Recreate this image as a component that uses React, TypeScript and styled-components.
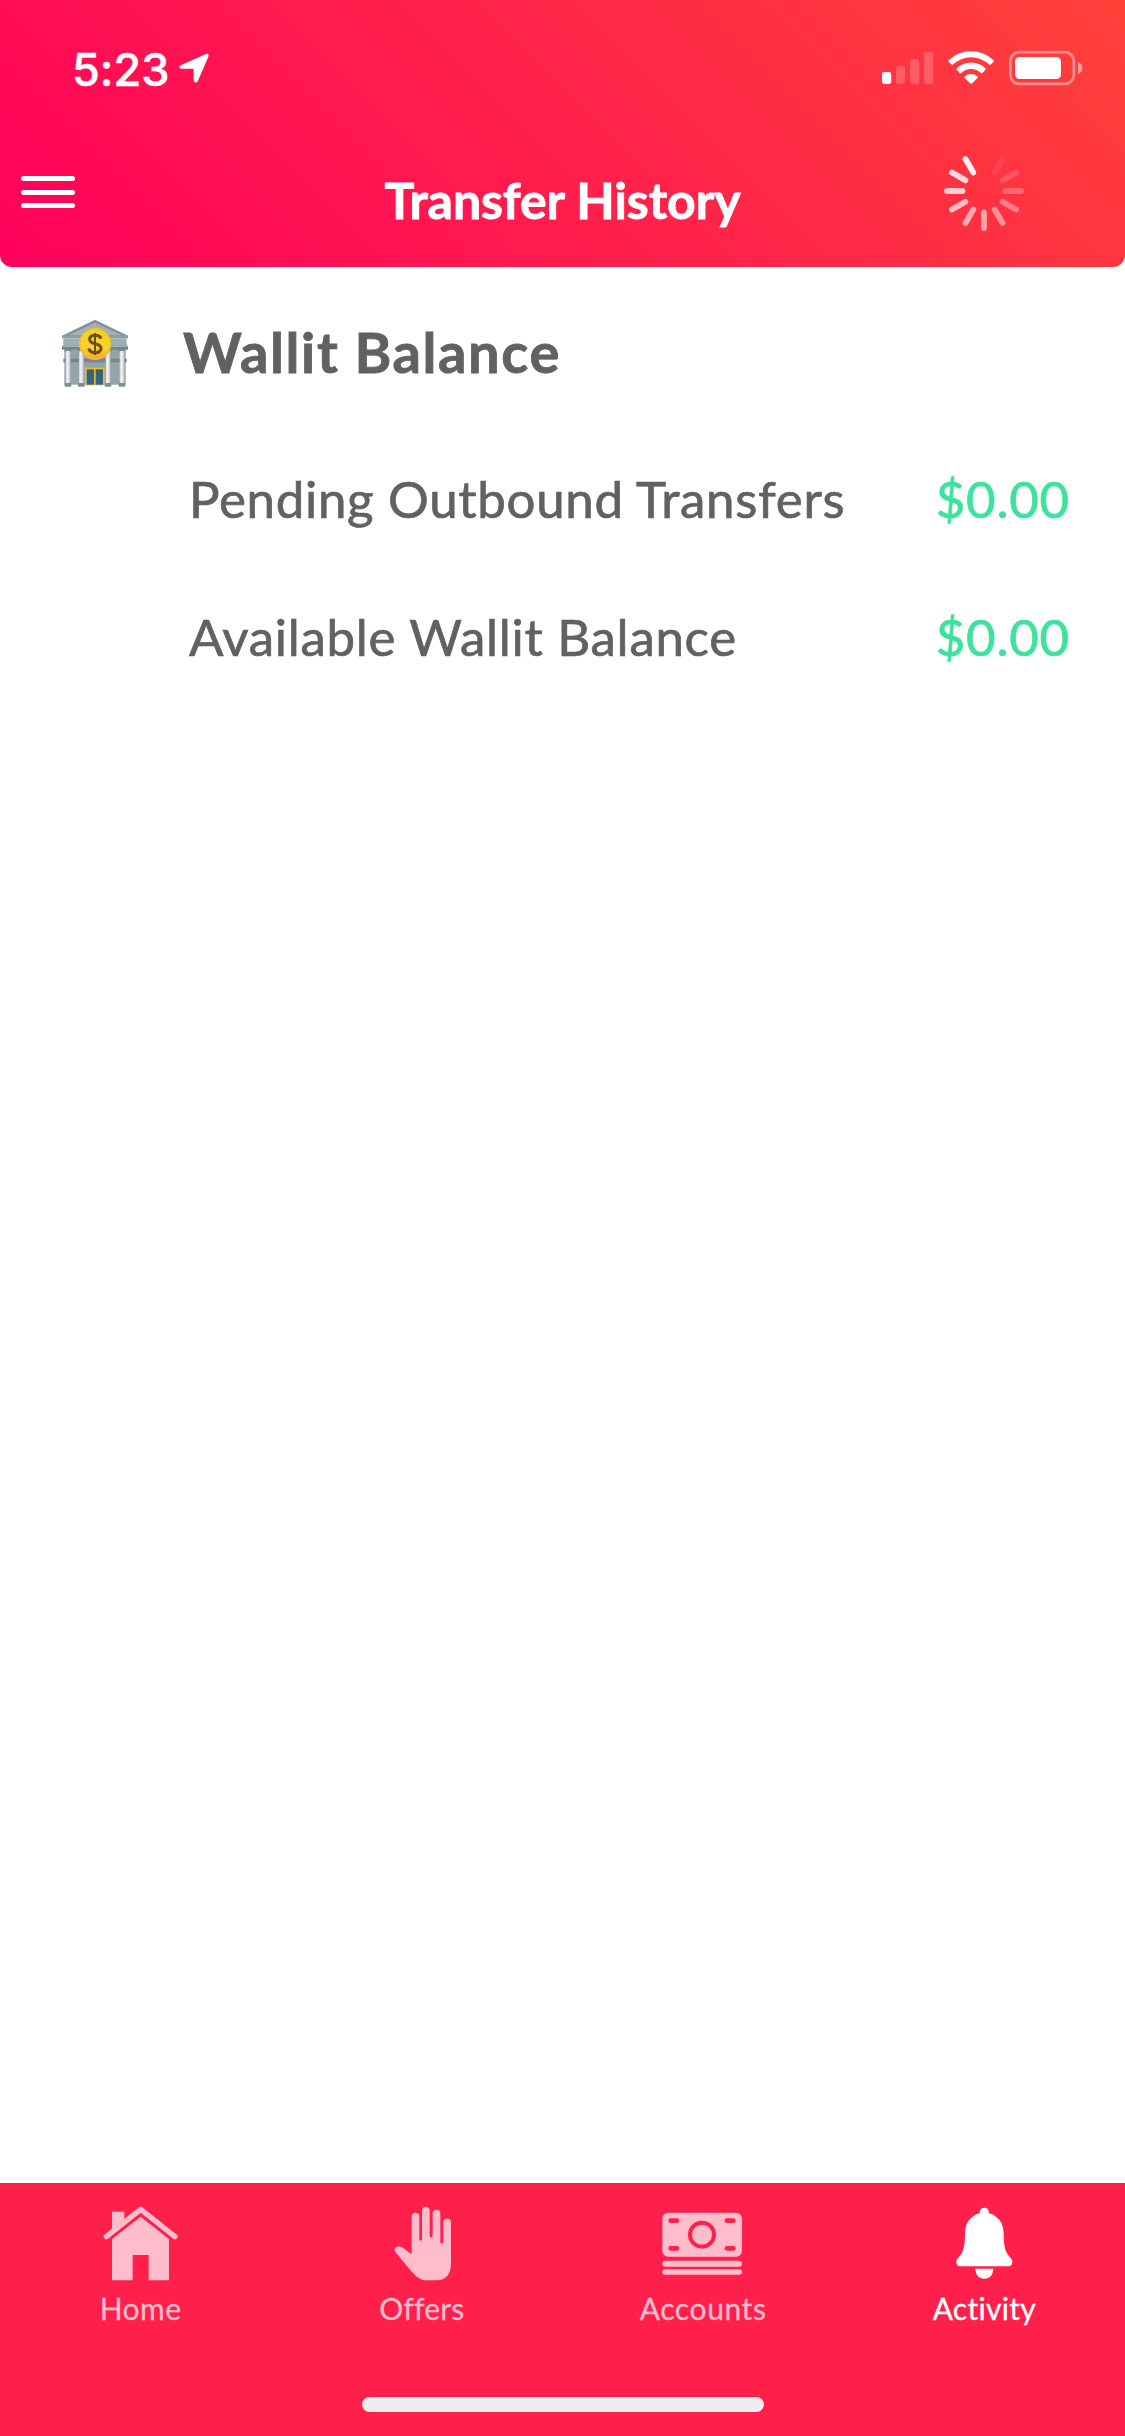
import React from "react";
import styled, { createGlobalStyle } from "styled-components";

const Global = createGlobalStyle`
  html, body { margin: 0; padding: 0; background: #fff; }
  *, *::before, *::after { box-sizing: border-box; }
  svg { display: block; flex: none; }
`;

const Screen = styled.div`
  width: 1125px;
  height: 2436px;
  display: flex;
  flex-direction: column;
  background: #ffffff;
  font-family: Lato, "Liberation Sans", sans-serif;
  font-variant-ligatures: none;
  white-space: nowrap;
  overflow: hidden;
`;

const Header = styled.header`
  flex: none;
  height: 267px;
  border-radius: 0 0 12px 12px;
  background: linear-gradient(45deg, #ff005c 0%, #ff4239 100%);
  color: #fff;
`;

const StatusBar = styled.div`
  height: 132px;
  padding: 50px 42px 0 72px;
  display: flex;
  justify-content: space-between;
  align-items: flex-start;
`;

const Clock = styled.div`
  display: flex;
  align-items: flex-start;
  gap: 10px;
`;

const Time = styled.span`
  font-family: Inter, sans-serif;
  font-weight: 500;
  font-size: 45px;
  line-height: 40px;
  letter-spacing: 0;
  -webkit-text-stroke: 0.5px currentColor;
`;

const NavBar = styled.div`
  height: 135px;
  display: grid;
  grid-template-columns: 240px 1fr 240px;
  padding: 0 21px;
`;

const MenuButton = styled.div`
  width: 54px;
  padding-top: 44px;
  display: flex;
  flex-direction: column;
  gap: 8.5px;
`;

const MenuLine = styled.div`
  height: 5px;
  border-radius: 2.5px;
  background: #fff;
`;

const Title = styled.h1`
  margin: 0;
  padding-top: 38px;
  text-align: center;
  font-weight: 700;
  font-size: 50px;
  line-height: 60px;
  letter-spacing: -0.1px;
  -webkit-text-stroke: 0.8px currentColor;
`;

const SpinnerSlot = styled.div`
  display: flex;
  justify-content: flex-end;
  padding: 16px 77px 0 0;
`;

const Content = styled.main`
  flex: 1;
  padding: 48px 55px 0 60px;
  color: #616161;
`;

const SectionHead = styled.div`
  display: flex;
  height: 80px;
  gap: 53px;
`;

const SectionTitle = styled.h2`
  margin: -3px 0 0;
  font-weight: 700;
  font-size: 56px;
  line-height: 80px;
  letter-spacing: 1.6px;
  -webkit-text-stroke: 0.8px currentColor;
`;

const BalanceRow = styled.div<{ $top: number }>`
  margin-top: ${(p) => p.$top}px;
  padding-left: 129px;
  height: 60px;
  display: flex;
  justify-content: space-between;
  font-size: 51px;
  line-height: 60px;
  -webkit-text-stroke: 0.7px currentColor;
`;

const Label = styled.span<{ $track: number }>`
  letter-spacing: ${(p) => p.$track}px;
`;

const Amount = styled.span`
  color: #3de29d;
  letter-spacing: 0.8px;
`;

const TabBar = styled.nav`
  flex: none;
  height: 253px;
  background: #ff1f4b;
  display: flex;
  flex-direction: column;
`;

const Tabs = styled.div`
  height: 214px;
  display: grid;
  grid-template-columns: repeat(4, 1fr);
`;

const Tab = styled.div<{ $active?: boolean }>`
  display: flex;
  flex-direction: column;
  align-items: center;
  padding-top: 22px;
  color: ${(p) => (p.$active ? "#ffffff" : "#ffbccb")};
`;

const IconBox = styled.div`
  height: 78px;
  padding-top: 1px;
`;

const TabLabel = styled.span<{ $track: number }>`
  font-size: 30px;
  line-height: 40px;
  margin-top: 5px;
  letter-spacing: ${(p) => p.$track}px;
  -webkit-text-stroke: 0.3px currentColor;
`;

const HomeIndicator = styled.div`
  width: 402px;
  height: 15px;
  border-radius: 8px;
  margin: 0 auto;
  background: #eeeeee;
`;

const ArrowSvg = styled.svg`
  margin-top: 3px;
`;

const LocationArrow = () => (
  <ArrowSvg width="31" height="31" viewBox="538 160 93 93">
    <path
      d="M545 196 L619 163 Q629 160 626 171 L595 243 Q591 251 586 248 Q582 247 582 241 L582 210 Q582 207 579 207 L546 207 Q540 207 539 202 Q539 198 545 196 Z"
      fill="currentColor"
    />
  </ArrowSvg>
);

const StatusIcons = () => (
  <svg width="202" height="36" viewBox="881 51 202 36">
    <rect x="882" y="73" width="9.2" height="12" rx="2.4" fill="#fff" />
    <g fill="#fff" fillOpacity="0.2">
      <rect x="896" y="67" width="9.2" height="18" rx="2.4" />
      <rect x="910" y="60" width="9.2" height="25" rx="2.4" />
      <rect x="924" y="53" width="9.2" height="32" rx="2.4" />
    </g>
    <path
      d="M948.6 61.2 A32.5 32.5 0 0 1 993.6 61.2 Q994.2 62 993.6 62.7 L990.6 65.6 Q989.9 66.2 989.2 65.6 A26.2 26.2 0 0 0 953 65.6 Q952.3 66.2 951.6 65.6 L948.6 62.7 Q948 62 948.6 61.2 Z"
      fill="#fff"
    />
    <path
      d="M956.6 69.4 A21 21 0 0 1 985.6 69.4 Q986.2 70.1 985.6 70.8 L982.4 73.9 Q981.7 74.4 981 73.9 A14.6 14.6 0 0 0 961.2 73.9 Q960.5 74.4 959.8 73.9 L956.6 70.8 Q956 70.1 956.6 69.4 Z"
      fill="#fff"
    />
    <path
      d="M964.7 77.4 A9.8 9.8 0 0 1 977.5 77.4 Q978.2 78.2 977.5 79 L971.9 84.5 Q971.1 85.2 970.3 84.5 L964.7 79 Q964 78.2 964.7 77.4 Z"
      fill="#fff"
    />
    <rect x="1010.3" y="53.2" width="63.6" height="31.6" rx="9" fill="none" stroke="#fff" strokeOpacity="0.42" strokeWidth="2.8" />
    <rect x="1015" y="58" width="46" height="22" rx="4.6" fill="#fff" />
    <path d="M1078 63 Q1082.4 65 1082.4 69 Q1082.4 73 1078 75 Z" fill="#fff" fillOpacity="0.5" />
  </svg>
);

const spokes = [0.08, 0.17, 0.25, 0.36, 0.45, 0.55, 0.6, 0.68, 0.76, 0.82, 0.92];

const Spinner = () => (
  <svg width="86" height="86" viewBox="-43 -43 86 86">
    {spokes.map((opacity, i) => (
      <line
        key={i}
        x1="0"
        x2="0"
        y1="-21.5"
        y2="-37"
        stroke="#fff"
        strokeWidth="5.8"
        strokeLinecap="round"
        strokeOpacity={opacity}
        transform={`rotate(${(i + 1) * 30})`}
      />
    ))}
  </svg>
);

const BankSvg = styled.svg`
  margin-top: 4px;
`;

const BankIcon = () => (
  <BankSvg width="70" height="70" viewBox="60 57 210 210">
    <defs>
      <linearGradient id="coin" x1="0" y1="0" x2="0" y2="1">
        <stop offset="0" stopColor="#f6cf1c" />
        <stop offset="0.6" stopColor="#fbd32b" />
        <stop offset="1" stopColor="#f3a53a" />
      </linearGradient>
      <linearGradient id="column" x1="0" y1="0" x2="1" y2="0">
        <stop offset="0" stopColor="#c9c9d2" />
        <stop offset="0.4" stopColor="#f7f5f9" />
        <stop offset="1" stopColor="#bfc0ca" />
      </linearGradient>
      <linearGradient id="glass" x1="0" y1="0" x2="0" y2="1">
        <stop offset="0" stopColor="#3c5f70" />
        <stop offset="1" stopColor="#2c6a8e" />
      </linearGradient>
    </defs>
    <rect x="73" y="145" width="184" height="109" fill="#93a5a9" />
    <rect x="70" y="176" width="190" height="11" fill="#74878c" />
    <path d="M165 59 L264 107 L264 114 L66 114 L66 107 Z" fill="#7f9297" />
    <path d="M165 68 L246 106 L84 106 Z" fill="#a2b2b5" />
    <rect x="66" y="107" width="198" height="8" fill="#8d9fa3" />
    <rect x="70" y="115" width="190" height="24" fill="#9fb0b3" />
    <rect x="66" y="137" width="198" height="12" fill="#71858a" />
    <rect x="66" y="137" width="198" height="4" fill="#a6b5b8" />
    {[77, 117, 197, 239].map((x) => (
      <g key={x}>
        <rect x={x - 3} y="148" width="20" height="7" fill="#788b90" />
        <rect x={x} y="153" width="14" height="98" fill="url(#column)" />
        <rect x={x - 3} y="249" width="20" height="11" rx="2" fill="#7e8f94" />
      </g>
    ))}
    <rect x="135" y="203" width="59" height="53" fill="#e9bd2c" />
    <rect x="140" y="208" width="22" height="46" fill="url(#glass)" />
    <rect x="167" y="208" width="22" height="46" fill="url(#glass)" />
    <circle cx="165.500" cy="132" r="48" fill="url(#coin)" />
    <circle cx="165.500" cy="132" r="46" fill="none" stroke="#f2b92a" strokeWidth="3" />
    <g fill="none" stroke="#6b4d16" strokeWidth="9">
      <path d="M183 116 Q180 106 165 106 Q149 107 149 118 Q149 128 165 131 Q184 135 183 146 Q181 158 165 158 Q149 157 146 145" />
      <path d="M165 99 V165" strokeWidth="6" />
    </g>
  </BankSvg>
);

const HomeIcon = () => (
  <svg width="75" height="75" viewBox="130 106 225 225">
    <path d="M157 123 H194 V146 L157 177 Z" fill="currentColor" />
    <path
      d="M140 198 L243 116 L346 198"
      fill="none"
      stroke="currentColor"
      strokeWidth="16"
      strokeLinecap="round"
      strokeLinejoin="round"
    />
    <path d="M243 138 L328 205 V329 H267 V253 H219 V329 H157 V205 Z" fill="currentColor" />
  </svg>
);

const HandIcon = () => (
  <svg width="75" height="75" viewBox="133 106 225 225">
    <path
      d="M216 251 V138 A11.500 11.500 0 0 1 239 138 V206 Q239 210 243 210 Q247 210 247 206 V120 A11.500 11.500 0 0 1 270 120 V196 Q270 200 274.500 200 Q279 200 279 196 V129 A11.500 11.500 0 0 1 302 129 V214 Q302 218 306.500 218 Q311 218 311 214 V155 A11.500 11.500 0 0 1 334 155 V280 C334 310 318 329 292 329 H262 C244 329 234 321 222 309 C205 291 185 265 167 243 C160 233 170 226 182 228 C194 231 204 243 216 251 Z"
      fill="currentColor"
    />
  </svg>
);

const CashIcon = () => (
  <svg width="82" height="75" viewBox="156 106 246 225">
    <rect x="157" y="126" width="239" height="132" rx="18" fill="currentColor" />
    <g fill="#ff1f4b">
      <rect x="175" y="143" width="33" height="14" rx="7" />
      <rect x="344" y="143" width="33" height="14" rx="7" />
      <rect x="175" y="226" width="33" height="14" rx="7" />
      <rect x="344" y="226" width="33" height="14" rx="7" />
    </g>
    <circle cx="276" cy="192" r="36" fill="none" stroke="#ff1f4b" strokeWidth="12" />
    <rect x="157" y="270" width="239" height="18" rx="9" fill="currentColor" />
    <rect x="157" y="296" width="239" height="16" rx="8" fill="currentColor" />
  </svg>
);

const BellIcon = () => (
  <svg width="75" height="75" viewBox="170 107 225 225">
    <path
      d="M268 129 C268 118 273 112 282 112 C291 112 296 118 296 129 C323 136 340 158 340 190 C340 228 345 247 361 263 C366 268 366 272 366 276 C366 283 362 288 355 288 H209 C202 288 198 283 198 276 C198 272 198 268 203 263 C219 247 224 228 224 190 C224 158 241 136 268 129 Z"
      fill="currentColor"
    />
    <path d="M255 295 H309 C308 314 298 325 282 325 C266 325 256 314 255 295 Z" fill="currentColor" />
  </svg>
);

const balances = [
  { label: "Pending Outbound Transfers", amount: "$0.00", top: 74, track: 0.7 },
  { label: "Available Wallit Balance", amount: "$0.00", top: 78, track: 0.72 },
];

const tabs = [
  { label: "Home", Icon: HomeIcon, track: 0.5 },
  { label: "Offers", Icon: HandIcon, track: 0.2 },
  { label: "Accounts", Icon: CashIcon, track: 0.6 },
  { label: "Activity", Icon: BellIcon, track: 0.3, active: true },
];

export default function App() {
  return (
    <Screen>
      <Global />
      <Header>
        <StatusBar>
          <Clock>
            <Time>5:23</Time>
            <LocationArrow />
          </Clock>
          <StatusIcons />
        </StatusBar>
        <NavBar>
          <MenuButton>
            <MenuLine />
            <MenuLine />
            <MenuLine />
          </MenuButton>
          <Title>Transfer History</Title>
          <SpinnerSlot>
            <Spinner />
          </SpinnerSlot>
        </NavBar>
      </Header>
      <Content>
        <SectionHead>
          <BankIcon />
          <SectionTitle>Wallit Balance</SectionTitle>
        </SectionHead>
        {balances.map((b) => (
          <BalanceRow key={b.label} $top={b.top}>
            <Label $track={b.track}>{b.label}</Label>
            <Amount>{b.amount}</Amount>
          </BalanceRow>
        ))}
      </Content>
      <TabBar>
        <Tabs>
          {tabs.map(({ label, Icon, track, active }) => (
            <Tab key={label} $active={active}>
              <IconBox>
                <Icon />
              </IconBox>
              <TabLabel $track={track}>{label}</TabLabel>
            </Tab>
          ))}
        </Tabs>
        <HomeIndicator />
      </TabBar>
    </Screen>
  );
}
